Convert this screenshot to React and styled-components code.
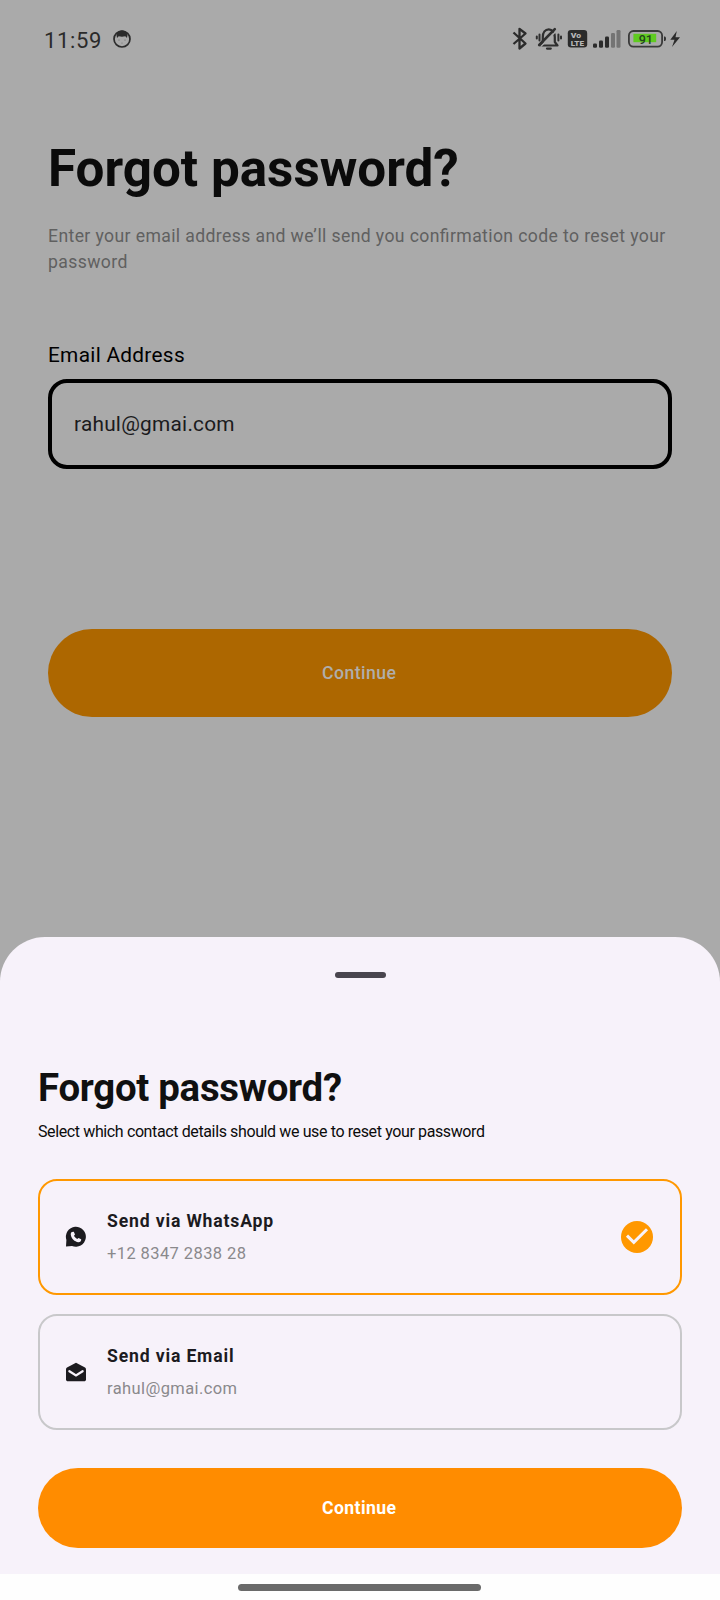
import React from "react";
import styled, { createGlobalStyle } from "styled-components";

const GlobalStyle = createGlobalStyle`
  * { box-sizing: border-box; }
  body { margin: 0; background: #fff; font-family: Roboto, sans-serif; }
`;

const Screen = styled.main`
  width: 720px;
  height: 1600px;
  display: flex;
  flex-direction: column;
  background: #aaaaaa;
  overflow: hidden;
`;

const StatusBar = styled.header`
  height: 80px;
  padding: 0 38px 0 44px;
  display: flex;
  align-items: center;
  justify-content: space-between;
  color: #2b2b2b;
`;

const StatusGroup = styled.div`
  display: flex;
  align-items: center;
  svg { display: block; }
`;

const Clock = styled.span`
  font-size: 22px;
  line-height: 28px;
  letter-spacing: 0.65px;
  margin-right: 10.2px;
  padding-top: 1px;
`;

const Form = styled.section`
  flex: 1;
  padding: 55px 48px 0;
  display: flex;
  flex-direction: column;
`;

const Title = styled.h1`
  margin: 0;
  font-weight: 700;
  color: ${(p) => (p.$small ? "#101010" : "#0b0b0b")};
  font-size: ${(p) => (p.$small ? 38.4 : 51.2)}px;
  line-height: ${(p) => (p.$small ? 46 : 68)}px;
  letter-spacing: ${(p) => (p.$small ? -0.27 : 0)}px;
`;

const Lead = styled.p`
  margin: 20px 0 0;
  font-size: 17.6px;
  line-height: 26px;
  letter-spacing: 0.39px;
  font-feature-settings: "liga" 1;
  color: #606060;
`;

const Label = styled.label`
  margin-top: 67px;
  font-size: 20.8px;
  line-height: 26px;
  letter-spacing: 0.3px;
  color: #000;
`;

const Field = styled.div`
  margin-top: 11px;
  height: 90px;
  border: 4px solid #000;
  border-radius: 19px;
  padding: 0 22px;
  display: flex;
  align-items: center;
  font-size: 20.8px;
  letter-spacing: 0.25px;
  color: #1b1b1d;
`;

const PillButton = styled.button`
  border: 0;
  padding: 0 1.5px 0 0;
  width: 100%;
  height: ${(p) => (p.$dimmed ? 88 : 80)}px;
  margin-top: ${(p) => (p.$dimmed ? 160 : 38)}px;
  border-radius: 44px;
  background: ${(p) => (p.$dimmed ? "#ad6700" : "#ff8c00")};
  color: ${(p) => (p.$dimmed ? "#b0aeab" : "#fff")};
  font-family: inherit;
  font-size: 17.6px;
  font-weight: ${(p) => (p.$dimmed ? 500 : 700)};
  letter-spacing: ${(p) => (p.$dimmed ? 0.5 : 0.4)}px;
`;

const Sheet = styled.section`
  height: 637px;
  padding: 35px 38px 0;
  border-radius: 45px 45px 0 0;
  background: #f7f2fa;
  display: flex;
  flex-direction: column;
`;

const Handle = styled.div`
  align-self: center;
  width: 51px;
  height: 6px;
  border-radius: 3px;
  background: #49454e;
  margin-bottom: 87px;
`;

const SheetText = styled.p`
  margin: 9px 0 35px;
  font-size: 16px;
  line-height: 24px;
  letter-spacing: -0.38px;
  color: #0c0c0c;
`;

const Options = styled.div`
  display: flex;
  flex-direction: column;
  gap: 19px;
`;

const OptionCard = styled.div`
  height: 116px;
  border: 2px solid ${(p) => (p.$selected ? "#ff9800" : "#c8c8ca")};
  border-radius: 19px;
  padding: 0 26px 0 25px;
  display: flex;
  align-items: center;
  svg { display: block; flex: none; }
`;

const OptionBody = styled.div`
  flex: 1;
  margin-left: 20px;
  padding-top: 1px;
`;

const OptionTitle = styled.div`
  font-size: 17.6px;
  font-weight: 700;
  line-height: 26px;
  letter-spacing: 0.84px;
  color: #1c1b1f;
`;

const OptionDetail = styled.div`
  margin-top: 7px;
  font-size: 16.5px;
  line-height: 26px;
  letter-spacing: 0.4px;
  color: #8a898c;
`;

const NavBar = styled.footer`
  height: 26px;
  background: #fefefe;
  display: flex;
  justify-content: center;
  padding: 10px 1px 0 0;
`;

const NavPill = styled.div`
  width: 243px;
  height: 7px;
  border-radius: 4px;
  background: #6a6a6a;
`;

const FaceMark = styled.svg`
  margin-bottom: 3px;
`;

const FaceIcon = () => (
  <FaceMark width="20" height="20" viewBox="0 0 20 20">
    <circle cx="10" cy="10" r="8" fill="none" stroke="#2b2b2b" strokeWidth="1.7" />
    <path d="M4.5 6 C5 3 7 1.5 10 1.5 C13 1.5 15 3 15.5 6 L15 9 L13.3 7.3 C11 7.9 9 7.9 6.7 7.3 L5 9 Z" fill="#2b2b2b" />
    <g fill="#666">
      <circle cx="7" cy="11" r=".6" />
      <circle cx="13" cy="11" r=".6" />
      <circle cx="10" cy="14" r=".5" />
    </g>
  </FaceMark>
);

const StatusIcons = () => (
  <svg width="170" height="30" viewBox="0 0 170 30">
    <path d="M1.5 7.5 L13.5 18.5 L7.5 23.5 V3.8 L13.5 8.5 L1.5 19" fill="none" stroke="#2b2b2b" strokeWidth="2.3" strokeLinejoin="round" />
    <g fill="none" stroke="#2f2f2f" strokeWidth="2.2" strokeLinecap="round" strokeLinejoin="round">
      <path d="M28.5 20.5 H45.5 L42.8 17 V12 C42.8 7.6 40.2 4.3 36.8 4.3 C33.2 4.3 30.8 7.6 30.8 12 V17 L28.5 20.5" />
      <path d="M35 23.6 H38.8" />
      <path d="M27.5 9.5 V15.5 M24.8 11.5 V13.5 M46.4 9.5 V15.5 M49 11.5 V13.5" strokeWidth="2" />
      <path d="M29 21.2 L44 6.2" stroke="#aaa" strokeWidth="1.6" />
      <path d="M27.2 20 L42.8 4.2" strokeWidth="2.6" />
    </g>
    <rect x="55.8" y="5" width="19.4" height="17.4" rx="3.2" fill="#2b2b2b" />
    <g fill="#b6b6b6" fontFamily="Roboto, sans-serif" fontWeight="900">
      <text x="58.7" y="13" fontSize="8" textLength="10.3" lengthAdjust="spacingAndGlyphs">Vo</text>
      <text x="58.7" y="20.5" fontSize="8" textLength="13.3" lengthAdjust="spacingAndGlyphs">LTE</text>
    </g>
    <g fill="#2b2b2b">
      <rect x="81" y="18.5" width="4" height="4.2" rx="1.2" />
      <rect x="87" y="15.5" width="4" height="7.2" rx="1.2" />
      <rect x="93" y="11.5" width="4" height="11.2" rx="1.2" />
    </g>
    <g fill="#747474">
      <rect x="99" y="8" width="4" height="14.7" rx="1.2" />
      <rect x="104.5" y="5" width="4" height="17.7" rx="1.2" />
    </g>
    <rect x="116.9" y="6" width="33.2" height="15.6" rx="4.5" fill="none" stroke="#3a3a3a" strokeWidth="1.8" />
    <rect x="121.4" y="8.8" width="22.8" height="8.4" fill="#5fcb20" />
    <path d="M152 11.6 C153.5 11.6 154 12.2 154 13.7 C154 15.2 153.5 16 152 16 Z" fill="#333" />
    <text x="133.8" y="19" fontSize="12.6" fontWeight="500" fill="#24451c" textAnchor="middle" fontFamily="Roboto, sans-serif">91</text>
    <path d="M164.8 6 L158.3 14.8 H162.5 L160 22 L168 12.3 H163.5 Z" fill="#2b2b2b" />
  </svg>
);

const WhatsAppIcon = () => (
  <svg width="22" height="22" viewBox="0 0 22 22">
    <path d="M1 20.6 L1.4 14 A10 10 0 1 1 7 20 Z" fill="#1c1b1f" />
    <path d="M6.8 5.9 L8.8 5.7 L10 8.6 L9 9.8 C9.7 11.2 10.8 12.3 12.2 13 L13.5 11.9 L16.2 13.2 C16.4 15.2 15 16.3 13.4 16.2 C9.5 15.6 6.4 12.6 5.8 8.7 C5.6 7.5 6 6.5 6.8 5.9 Z" fill="#f7f2fa" />
  </svg>
);

const MailIcon = () => (
  <svg width="22" height="22" viewBox="0 0 22 22">
    <path d="M11 1.8 L20 6.6 C20.7 7.1 21 7.6 21 8.4 V18.2 C21 19.5 20.2 20.3 19 20.3 H3 C1.8 20.3 1 19.5 1 18.2 V8.4 C1 7.6 1.3 7.1 2 6.6 Z" fill="#1c1b1f" />
    <path d="M4.4 10.2 L11 14.4 L17.6 10.2" fill="none" stroke="#f7f2fa" strokeWidth="2.3" strokeLinecap="round" />
  </svg>
);

const CheckIcon = () => (
  <svg width="34" height="34" viewBox="0 0 34 34">
    <circle cx="17" cy="17" r="16" fill="#ff9800" />
    <path d="M7 15.6 L13.8 22.4 L27 9.2" fill="none" stroke="#f7f2fa" strokeWidth="3" />
  </svg>
);

const OPTIONS = [
  { title: "Send via WhatsApp", detail: "+12 8347 2838 28", Icon: WhatsAppIcon, selected: true },
  { title: "Send via Email", detail: "rahul@gmai.com", Icon: MailIcon, selected: false },
];

export default function App() {
  return (
    <>
      <GlobalStyle />
      <Screen>
        <StatusBar>
          <StatusGroup>
            <Clock>11:59</Clock>
            <FaceIcon />
          </StatusGroup>
          <StatusGroup>
            <StatusIcons />
          </StatusGroup>
        </StatusBar>
        <Form>
          <Title>Forgot password?</Title>
          <Lead>Enter your email address and we’ll send you confirmation code to reset your password</Lead>
          <Label>Email Address</Label>
          <Field>rahul@gmai.com</Field>
          <PillButton $dimmed>Continue</PillButton>
        </Form>
        <Sheet>
          <Handle />
          <Title as="h2" $small>Forgot password?</Title>
          <SheetText>Select which contact details should we use to reset your password</SheetText>
          <Options>
            {OPTIONS.map(({ title, detail, Icon, selected }) => (
              <OptionCard key={title} $selected={selected}>
                <Icon />
                <OptionBody>
                  <OptionTitle>{title}</OptionTitle>
                  <OptionDetail>{detail}</OptionDetail>
                </OptionBody>
                {selected && <CheckIcon />}
              </OptionCard>
            ))}
          </Options>
          <PillButton>Continue</PillButton>
        </Sheet>
        <NavBar>
          <NavPill />
        </NavBar>
      </Screen>
    </>
  );
}
